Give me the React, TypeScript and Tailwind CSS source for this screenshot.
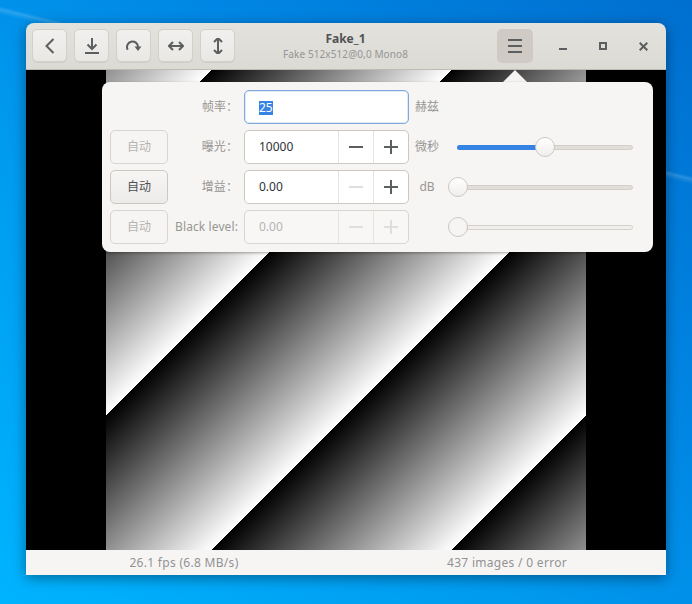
const font = "font-['Noto_Sans','Noto_Sans_CJK_SC',sans-serif]";

const rows = [
  { label: "曝光\uFF1A", value: "10000", unit: "微秒", auto: false, minus: true, plus: true, off: false, thumb: "left-[87px]", fill: true },
  { label: "增益\uFF1A", value: "0.00", unit: "dB", auto: true, minus: false, plus: true, off: false, thumb: "left-0", fill: false },
  { label: "Black level:", value: "0.00", unit: "", auto: false, minus: false, plus: false, off: true, thumb: "left-0", fill: false },
];

function ToolButton({ children }: { children: React.ReactNode }) {
  return (
    <button className="w-[35px] h-[33px] flex items-center justify-center rounded-[5px] border border-[#d3cfca] bg-gradient-to-b from-[#f1f0ee] to-[#eae8e5] shadow-[0_1px_0_rgba(0,0,0,0.05)]">
      {children}
    </button>
  );
}

function Sign({ kind, on }: { kind: "minus" | "plus"; on: boolean }) {
  return (
    <span className="w-[35px] h-full flex items-center justify-center border-l border-[#e6e3e0]">
      <svg width="16" height="16" viewBox="0 0 16 16" stroke={on ? "#5c5f5f" : "#dfdedc"} strokeWidth="2" fill="none">
        <path d="M1 8h14" />
        {kind === "plus" && <path d="M8 1v14" />}
      </svg>
    </span>
  );
}

function Slider({ thumb, fill, off }: { thumb: string; fill: boolean; off: boolean }) {
  return (
    <div className="relative w-[185px] h-[20px] ml-[9px] flex items-center pl-[9px]">
      <div className={`w-full h-[5px] rounded-full border ${off ? "bg-[#f1efed] border-[#d4d0cb]" : "bg-[#e2dfdb] border-[#d2cec9]"}`} />
      {fill && <div className="absolute left-[9px] w-[88px] h-[5px] rounded-l-full bg-[#3584e4]" />}
      <div className={`absolute ${thumb} top-0 w-[20px] h-[20px] rounded-full border border-[#cdc7c2] ${off ? "bg-[#f6f5f4]" : "bg-gradient-to-b from-[#ffffff] to-[#f0eeec]"}`} />
    </div>
  );
}

export default function App() {
  return (
    <div className={`${font} w-[692px] h-[604px] overflow-hidden pl-[26px] pt-[23px] bg-[linear-gradient(193.8deg,transparent_171px,rgba(255,255,255,0.16)_174px,transparent_179px),linear-gradient(222deg,#006fcf_0%,#0086e4_35%,#009cf0_65%,#00b4ff_100%)]`}>
      <div className="relative w-[640px] h-[552px] rounded-t-[8px] shadow-[0_3px_14px_rgba(0,0,0,0.4)]">
        <header className="h-[47px] grid grid-cols-[1fr_auto_1fr] items-start pt-[6px] pl-[6px] pr-[7px] rounded-t-[8px] border-b border-[#bfbab4] bg-gradient-to-b from-[#e4e2dd] to-[#dcdad5]">
          <div className="flex gap-[7px]">
            <ToolButton>
              <svg width="16" height="16" viewBox="0 0 16 16" fill="none" stroke="#5c5f5f" strokeWidth="2">
                <path d="M11.5 1 4.5 8l7 7" />
              </svg>
            </ToolButton>
            <ToolButton>
              <svg width="16" height="16" viewBox="0 0 16 16" fill="none" stroke="#5c5f5f" strokeWidth="2">
                <path d="M8 0v10M3.5 6.5 8 11l4.500-4.500M1 15h14" />
              </svg>
            </ToolButton>
            <ToolButton>
              <svg width="16" height="16" viewBox="0 0 16 16" fill="none" stroke="#5c5f5f" strokeWidth="2">
                <path d="M1.700 11.700A5.500 5.500 0 1 1 12 9" />
                <path d="M8.500 8.500h7L12 13z" fill="#5c5f5f" stroke="none" />
              </svg>
            </ToolButton>
            <ToolButton>
              <svg width="16" height="16" viewBox="0 0 16 16" fill="none" stroke="#5c5f5f" strokeWidth="2">
                <path d="M1 8h14M5 4 1 8l4 4M11 4l4 4-4 4" />
              </svg>
            </ToolButton>
            <ToolButton>
              <svg width="16" height="16" viewBox="0 0 16 16" fill="none" stroke="#5c5f5f" strokeWidth="2">
                <path d="M8 0v16M4 4l4-4 4 4M4 12l4 4 4-4" />
              </svg>
            </ToolButton>
          </div>
          <div className="flex flex-col items-center pt-[2px]">
            <span className="text-[12px] leading-[16px] font-bold text-[#505354]">Fake_1</span>
            <span className="text-[10px] leading-[14px] tracking-[0.1px] text-[#949695]">Fake 512x512@0,0 Mono8</span>
          </div>
          <div className="flex justify-end items-center">
            <button className="w-[36px] h-[34px] flex items-center justify-center rounded-[5px] bg-[#cfcac4]">
              <svg width="14" height="14" viewBox="0 0 14 14" fill="#5c5f5f">
                <rect y="0" width="14" height="2" />
                <rect y="6" width="14" height="2" />
                <rect y="12" width="14" height="2" />
              </svg>
            </button>
            <div className="flex ml-[10px] mr-[-4px] items-center text-[#5c5f5f] h-[34px]">
              <span className="w-[40px] flex justify-center">
                <svg width="8" height="8" viewBox="0 0 8 8" fill="currentColor">
                  <rect y="6" width="8" height="2" />
                </svg>
              </span>
              <span className="w-[40px] flex justify-center">
                <svg width="8" height="8" viewBox="0 0 8 8" fill="none" stroke="currentColor" strokeWidth="2">
                  <rect x="1" y="1" width="6" height="6" />
                </svg>
              </span>
              <span className="w-[40px] flex justify-center">
                <svg width="9" height="9" viewBox="0 0 9 9" fill="none" stroke="currentColor" strokeWidth="2">
                  <path d="M.7.7l7.600 7.600M8.300.7.7 8.300" />
                </svg>
              </span>
            </div>
          </div>
        </header>

        <main className="h-[480px] flex justify-center bg-black">
          <div className="w-[480px] h-full bg-[repeating-linear-gradient(135deg,#000_74.5px,#fff_244.2px)]" />
        </main>

        <footer className="h-[25px] grid grid-cols-2 items-center text-center text-[12px] tracking-[0.3px] text-[#929292] bg-[#f6f5f4]">
          <span className="pr-[4px]">26.1 fps (6.8 MB/s)</span>
          <span className="pl-[2px]">437 images / 0 error</span>
        </footer>

        <div className="absolute left-[477px] top-[47px] w-[24px] h-[12px] bg-[#f6f5f4] [clip-path:polygon(50%_0,100%_100%,0_100%)]" />
        <section className="absolute left-[76px] top-[59px] w-[551px] h-[170px] rounded-[8px] bg-[#f6f5f4] shadow-[0_1px_3px_rgba(0,0,0,0.35)] pt-[8px] pl-[8px] flex flex-col gap-[6px] text-[12px]">
          <div className="flex items-center h-[34px]">
            <span className="w-[58px]" />
            <span className="w-[64px] ml-[6px] text-right text-[#989693]">{"帧率\uFF1A"}</span>
            <div className="w-[165px] h-[34px] ml-[6px] flex items-center pl-[14px] pt-[2px] rounded-[5px] border border-[#7fa9dd] bg-white shadow-[inset_0_0_0_1px_rgba(127,169,221,0.25)]">
              <span className="bg-[#3584e4] text-white leading-[14px]">25</span>
            </div>
            <span className="w-[24px] ml-[6px] text-[#989693]">赫兹</span>
          </div>
          {rows.map((row) => (
            <div key={row.label} className="flex items-center h-[34px]">
              <button className={`w-[58px] h-[34px] rounded-[5px] border ${row.auto ? "border-[#cdc7c2] text-[#4c4f50] bg-gradient-to-b from-[#f7f6f5] to-[#edebe9]" : "border-[#d8d4d0] text-[#b5b3b0] bg-[#f6f5f4]"}`}>
                自动
              </button>
              <span className="w-[64px] ml-[6px] text-right text-[#989693] whitespace-nowrap tracking-[0.1px]">{row.label}</span>
              <div className={`w-[165px] h-[34px] ml-[6px] flex items-center rounded-[5px] border overflow-hidden ${row.off ? "border-[#d8d4d0] bg-[#f8f7f6]" : "border-[#cdc7c2] bg-white"}`}>
                <span className={`flex-1 pl-[14px] ${row.off ? "text-[#b5b3b0]" : "text-[#2e3436]"}`}>{row.value}</span>
                <Sign kind="minus" on={row.minus} />
                <Sign kind="plus" on={row.plus} />
              </div>
              <span className="w-[24px] ml-[6px] text-center text-[#989693]">{row.unit}</span>
              <Slider thumb={row.thumb} fill={row.fill} off={row.off} />
            </div>
          ))}
        </section>
      </div>
    </div>
  );
}
